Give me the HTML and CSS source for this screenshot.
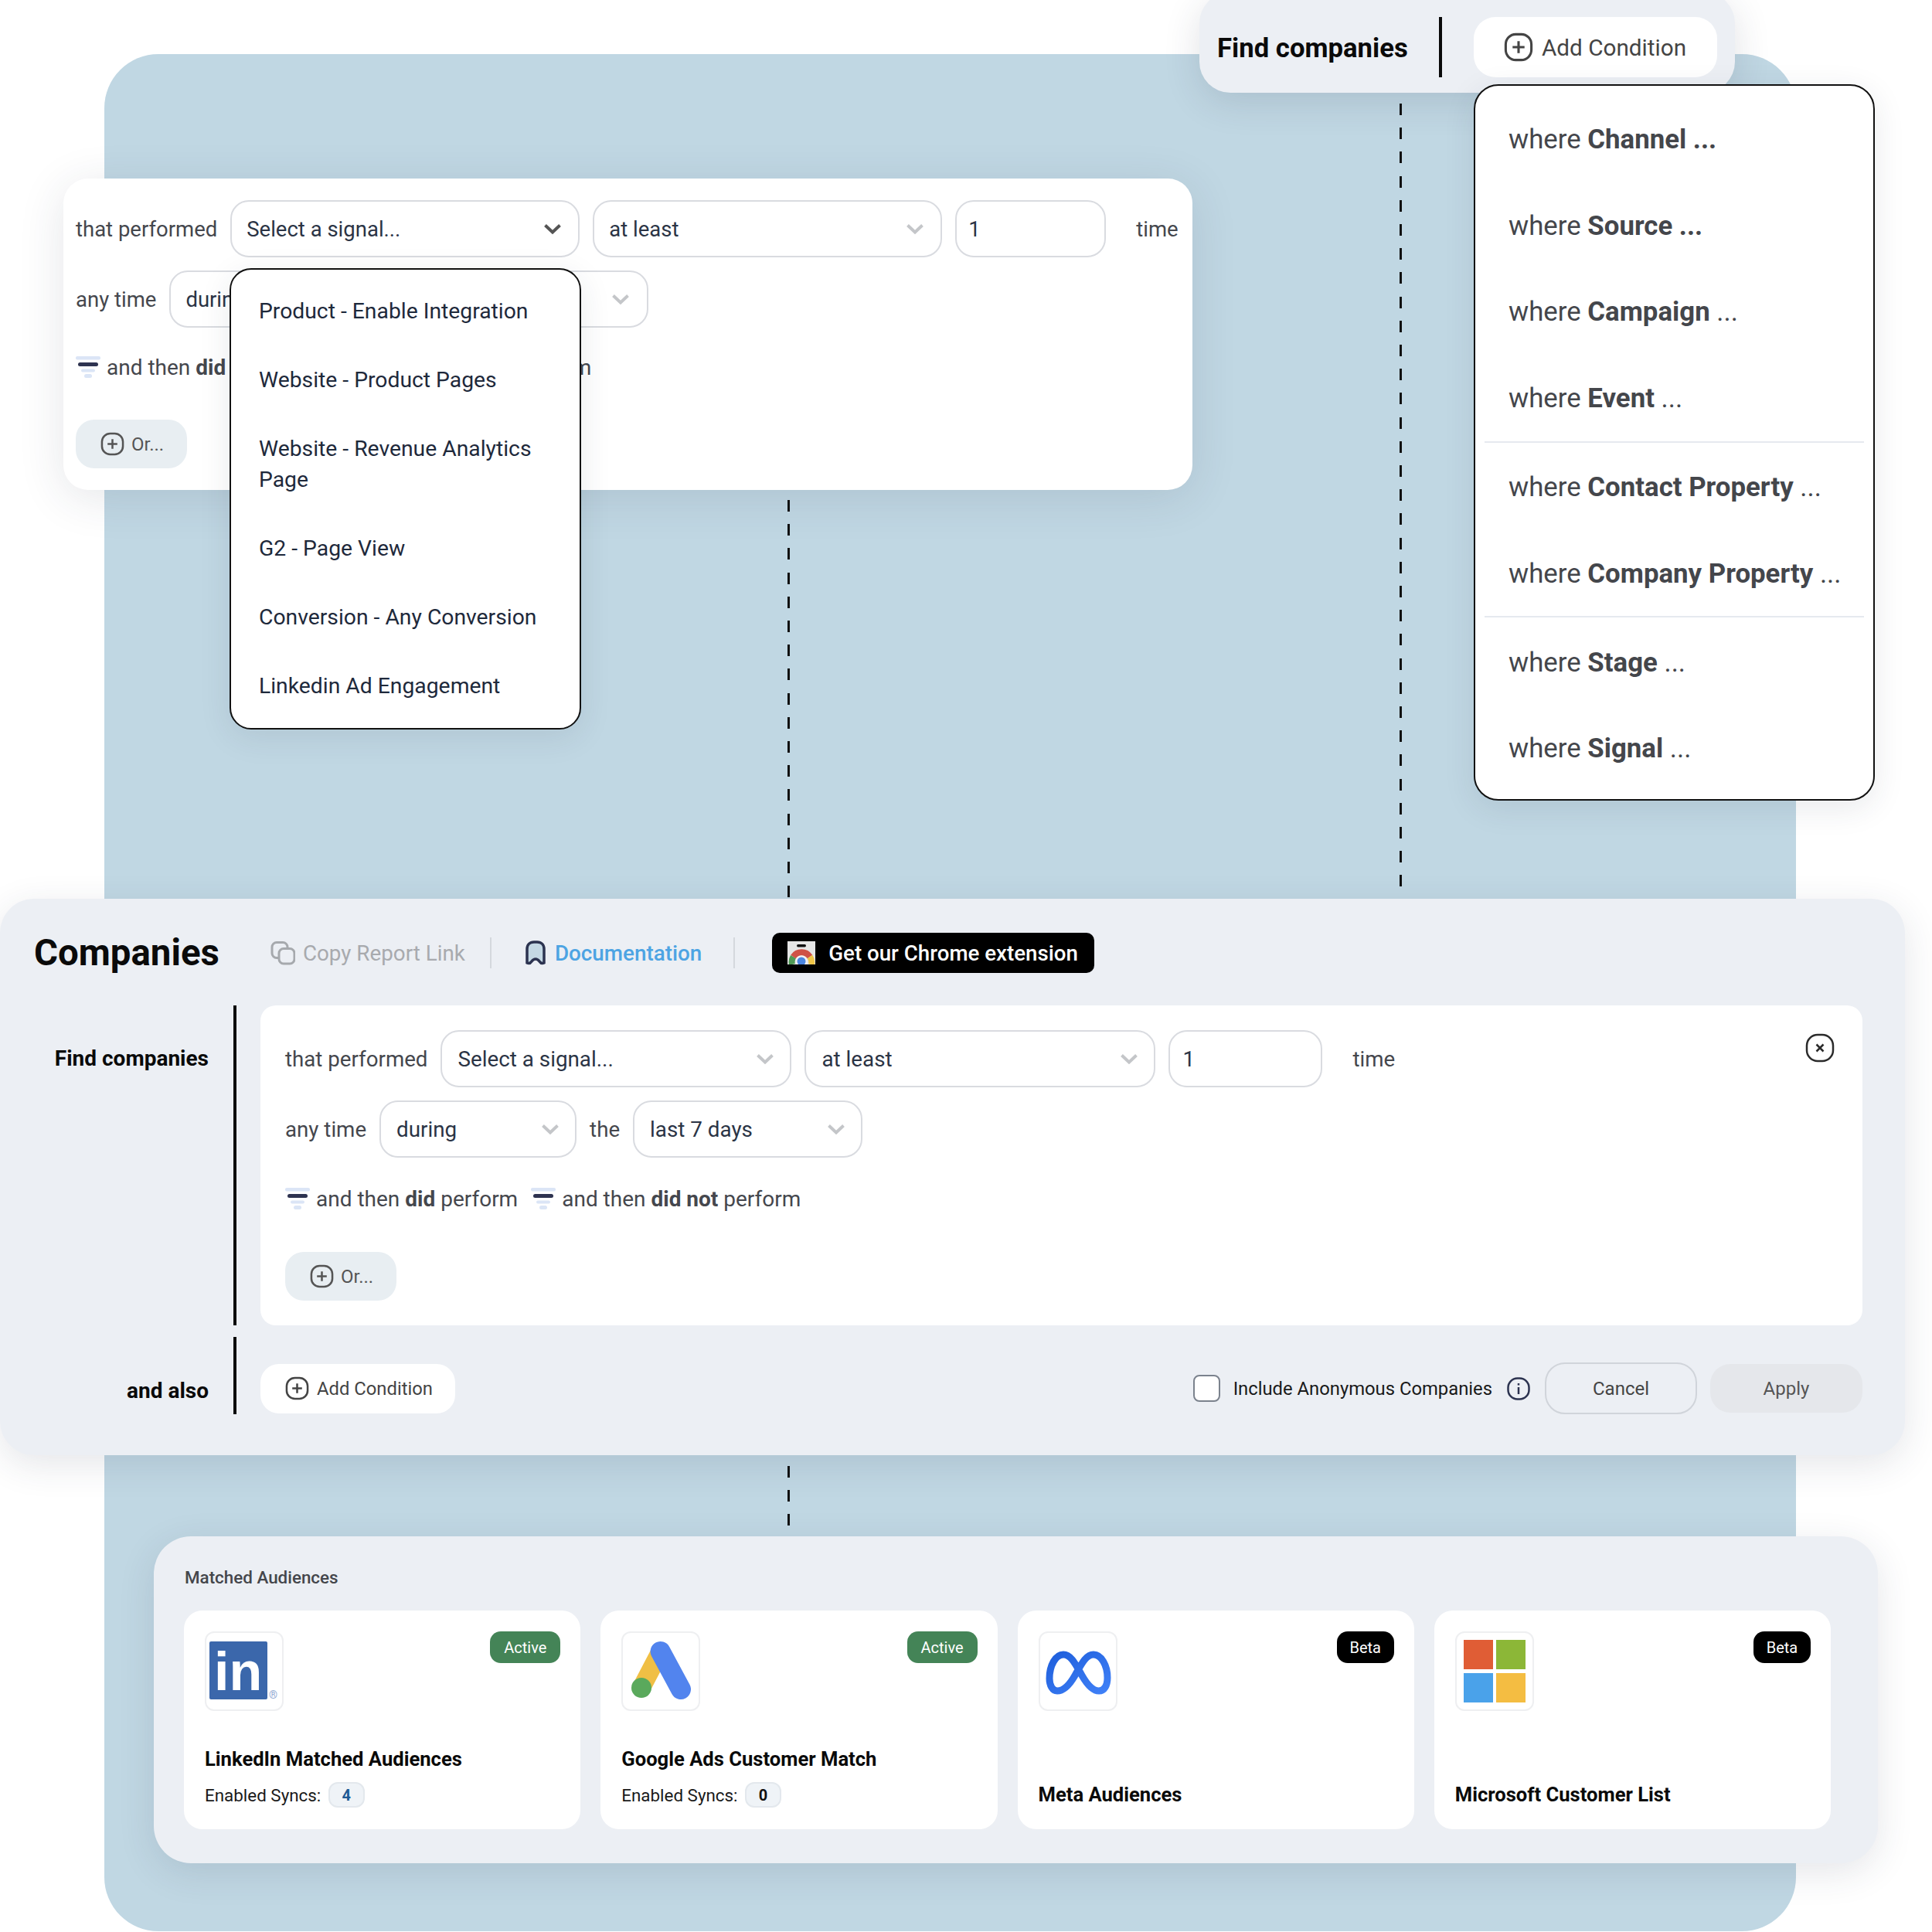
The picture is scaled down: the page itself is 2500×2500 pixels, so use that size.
FILE: index.html
```html
<!DOCTYPE html>
<html lang="en">
<head>
    <meta charset="UTF-8">
    <title>Companies - Find companies</title>
    <link rel="stylesheet" href="styles.css">
</head>
<body>
    <svg class="icon-defs" width="0" height="0">
        <symbol id="plus" viewBox="0 0 32 32">
            <rect x="2" y="2" width="28" height="28" rx="11" fill="none" stroke="currentColor" stroke-width="2.600"/>
            <path d="M16 9.500v13M9.500 16h13" fill="none" stroke="currentColor" stroke-width="2.600"/>
        </symbol>
        <symbol id="chevron" viewBox="0 0 24 14">
            <path d="M2.500 2.500L12 11.500L21.500 2.500" fill="none" stroke="currentColor" stroke-width="4"/>
        </symbol>
        <symbol id="funnel" viewBox="0 0 32 28">
            <rect x="0" y="0" width="32" height="4.500" rx="2" fill="#dbe5f6"/>
            <rect x="3" y="8" width="26" height="5" rx="2.500" fill="#2e3350"/>
            <rect x="7" y="16.500" width="18" height="4" rx="2" fill="#dbe5f6"/>
            <rect x="11" y="23" width="10" height="5" rx="2.500" fill="#dbe5f6"/>
        </symbol>
    </svg>

    <div class="stage">
        <div class="backdrop"></div>
        <div class="dash dash-right"></div>
        <div class="dash dash-middle"></div>
        <div class="dash dash-bottom"></div>

        <!-- top right: the bar with its condition menu -->
        <div class="find-bar">
            <span class="find-title">Find companies</span>
            <span class="find-rule"></span>
            <button class="add-btn add-btn-big"><svg class="plus-big"><use href="#plus"/></svg>Add Condition</button>
        </div>
        <ul class="menu condition-menu">
            <li>where <b>Channel ...</b></li>
            <li>where <b>Source ...</b></li>
            <li>where <b>Campaign</b> ...</li>
            <li class="group-end">where <b>Event</b> ...</li>
            <li>where <b>Contact Property</b> ...</li>
            <li class="group-end">where <b>Company Property</b> ...</li>
            <li>where <b>Stage</b> ...</li>
            <li>where <b>Signal</b> ...</li>
        </ul>

        <!-- top left: the signal form with its open select -->
        <div class="signal-panel">
            <div class="form-row">
                <span class="label">that performed</span>
                <div class="select select-signal">Select a signal...<svg class="chevron chevron-dark"><use href="#chevron"/></svg></div>
                <div class="select select-signal">at least<svg class="chevron"><use href="#chevron"/></svg></div>
                <div class="select select-count">1</div>
                <span class="label label-time">time</span>
            </div>
            <div class="form-row">
                <span class="label">any time</span>
                <div class="select select-during">during<svg class="chevron"><use href="#chevron"/></svg></div>
                <span class="label">the</span>
                <div class="select select-range">last 7 days<svg class="chevron"><use href="#chevron"/></svg></div>
            </div>
            <div class="then-row">
                <svg class="funnel"><use href="#funnel"/></svg><span class="label">and then <b>did</b> perform</span>
                <svg class="funnel funnel-next"><use href="#funnel"/></svg><span class="label">and then <b>did not</b> perform</span>
            </div>
            <button class="or-btn"><svg class="plus-small"><use href="#plus"/></svg>Or...</button>
            <ul class="menu signal-menu">
                <li>Product - Enable Integration</li>
                <li>Website - Product Pages</li>
                <li>Website - Revenue Analytics Page</li>
                <li>G2 - Page View</li>
                <li>Conversion - Any Conversion</li>
                <li>Linkedin Ad Engagement</li>
            </ul>
        </div>

        <!-- main companies panel -->
        <div class="companies-panel">
            <div class="companies-head">
                <h1>Companies</h1>
                <span class="copy-link">
                    <svg class="head-icon" viewBox="0 0 32 31">
                        <rect x="2" y="2" width="20" height="20" rx="6" fill="none" stroke="#a6a9ad" stroke-width="3"/>
                        <rect x="11" y="10" width="20" height="19.500" rx="6" fill="#eceff4" stroke="#a6a9ad" stroke-width="3"/>
                    </svg>
                    Copy Report Link
                </span>
                <span class="head-rule"></span>
                <span class="docs-link">
                    <svg class="head-icon" viewBox="0 0 28 32">
                        <path d="M3 29V11C3 5.500 6.500 2 12 2h4c5.500 0 9 3.500 9 9v18c-3 1.500-5-.5-6-2-1.500-2-3.500-3-5-3s-3.500 1-5 3c-1 1.500-3 3.500-6 2z" fill="#c4d8e4" stroke="#2c3350" stroke-width="3.500"/>
                    </svg>
                    Documentation
                </span>
                <span class="head-rule head-rule-last"></span>
                <span class="chrome-btn">
                    <svg class="chrome-icon" viewBox="0 0 36 30">
                        <rect width="36" height="30" fill="#e6e6e6"/>
                        <rect x="12" y="4" width="12" height="3.500" rx="1.700" fill="#111"/>
                        <path d="M6 30A13 13 0 0 1 7.500 20" fill="none" stroke="#4f9a55" stroke-width="8"/>
                        <path d="M7.500 20A13 13 0 0 1 29 20" fill="none" stroke="#cf5246" stroke-width="8"/>
                        <path d="M29 20A13 13 0 0 1 31 30" fill="none" stroke="#efc648" stroke-width="8"/>
                        <circle cx="18" cy="26" r="7.500" fill="#f4f4f4"/>
                        <circle cx="18" cy="26" r="5.500" fill="#4b86e0"/>
                    </svg>
                    Get our Chrome extension
                </span>
            </div>

            <div class="query-row">
                <div class="query-label">Find companies</div>
                <div class="query-bar"></div>
                <div class="query-card">
                    <div class="form-row">
                        <span class="label">that performed</span>
                        <div class="select select-signal">Select a signal...<svg class="chevron"><use href="#chevron"/></svg></div>
                        <div class="select select-signal">at least<svg class="chevron"><use href="#chevron"/></svg></div>
                        <div class="select select-count">1</div>
                        <span class="label label-time">time</span>
                    </div>
                    <div class="form-row">
                        <span class="label">any time</span>
                        <div class="select select-during">during<svg class="chevron"><use href="#chevron"/></svg></div>
                        <span class="label">the</span>
                        <div class="select select-range">last 7 days<svg class="chevron"><use href="#chevron"/></svg></div>
                    </div>
                    <div class="then-row">
                        <svg class="funnel"><use href="#funnel"/></svg><span class="label">and then <b>did</b> perform</span>
                        <svg class="funnel funnel-next"><use href="#funnel"/></svg><span class="label">and then <b>did not</b> perform</span>
                    </div>
                    <button class="or-btn"><svg class="plus-small"><use href="#plus"/></svg>Or...</button>
                    <svg class="close-icon" viewBox="0 0 38 38">
                        <rect x="2" y="2" width="34" height="34" rx="14" fill="none" stroke="#2b2b2b" stroke-width="2.500"/>
                        <path d="M14.500 14.500l9 9M23.500 14.500l-9 9" fill="none" stroke="#2b2b2b" stroke-width="2.500"/>
                    </svg>
                </div>
            </div>

            <div class="query-row also-row">
                <div class="query-label">and also</div>
                <div class="query-bar"></div>
                <div class="also-controls">
                    <button class="add-btn"><svg class="plus-small"><use href="#plus"/></svg>Add Condition</button>
                    <div class="also-actions">
                        <span class="checkbox"></span>
                        <span class="anon-label">Include Anonymous Companies</span>
                        <svg class="info-icon" viewBox="0 0 30 30">
                            <rect x="1.500" y="1.500" width="27" height="27" rx="12" fill="none" stroke="#2c3350" stroke-width="2.500"/>
                            <path d="M15 13v9M15 8v2.500" fill="none" stroke="#2c3350" stroke-width="2.500"/>
                        </svg>
                        <button class="cancel-btn">Cancel</button>
                        <button class="apply-btn">Apply</button>
                    </div>
                </div>
            </div>
        </div>

        <!-- matched audiences -->
        <div class="audiences-panel">
            <h2>Matched Audiences</h2>
            <div class="audience-grid">
                <div class="audience-card">
                    <div class="card-top">
                        <div class="logo-box">
                            <div class="linkedin-logo">in</div>
                            <span class="linkedin-mark">®</span>
                        </div>
                        <span class="status status-active">Active</span>
                    </div>
                    <div class="card-title">LinkedIn Matched Audiences</div>
                    <div class="card-syncs">Enabled Syncs: <span class="sync-count sync-on">4</span></div>
                </div>
                <div class="audience-card">
                    <div class="card-top">
                        <div class="logo-box">
                            <svg class="brand-logo" viewBox="0 0 102 102">
                                <path d="M50.600 26L26 73" fill="none" stroke="#f0bf45" stroke-width="24" stroke-linecap="round"/>
                                <path d="M50.600 26L77 75" fill="none" stroke="#5284ee" stroke-width="26" stroke-linecap="round"/>
                                <circle cx="26" cy="73" r="13" fill="#5aa95c"/>
                            </svg>
                        </div>
                        <span class="status status-active">Active</span>
                    </div>
                    <div class="card-title">Google Ads Customer Match</div>
                    <div class="card-syncs">Enabled Syncs: <span class="sync-count">0</span></div>
                </div>
                <div class="audience-card">
                    <div class="card-top">
                        <div class="logo-box">
                            <svg class="brand-logo" viewBox="0 0 102 102">
                                <defs>
                                    <linearGradient id="meta-blue" x1="0" y1="0" x2="1" y2="1">
                                        <stop offset="0" stop-color="#1f5fdc"/>
                                        <stop offset="1" stop-color="#3f80f7"/>
                                    </linearGradient>
                                </defs>
                                <path d="M14 61C14 44 22 30 32 30C42 30 48 43 56 57C64 71 71 77 78 77C85 77 89 70 89 60C89 44 81 30 71 30C61 30 55 43 47 57C39 71 31 77 24 77C18 77 14 70 14 61Z" fill="none" stroke="url(#meta-blue)" stroke-width="9"/>
                            </svg>
                        </div>
                        <span class="status status-beta">Beta</span>
                    </div>
                    <div class="card-title">Meta Audiences</div>
                </div>
                <div class="audience-card">
                    <div class="card-top">
                        <div class="logo-box">
                            <div class="ms-logo">
                                <span class="ms-red"></span>
                                <span class="ms-green"></span>
                                <span class="ms-blue"></span>
                                <span class="ms-yellow"></span>
                            </div>
                        </div>
                        <span class="status status-beta">Beta</span>
                    </div>
                    <div class="card-title">Microsoft Customer List</div>
                </div>
            </div>
        </div>
    </div>
</body>
</html>
```

FILE: styles.css
```css
* {
    box-sizing: border-box;
}
body {
    margin: 0;
    background: #fff;
    font-family: Roboto, 'Liberation Sans', sans-serif;
    overflow: hidden;
}
button {
    font: inherit;
    border: none;
    padding: 0;
}
.icon-defs {
    position: absolute;
}
.stage {
    position: relative;
    width: 2500px;
    height: 2500px;
    overflow: hidden;
}
.backdrop {
    position: absolute;
    left: 135px;
    top: 70px;
    width: 2189px;
    height: 2429px;
    border-radius: 70px;
    background: #c0d7e3;
}
.dash {
    position: absolute;
    width: 3px;
    background: repeating-linear-gradient(to bottom, #111 0 15px, transparent 15px 31.2px);
}
.dash-right {
    left: 1811px;
    top: 134px;
    height: 1016px;
}
.dash-middle {
    left: 1019px;
    top: 647px;
    height: 515px;
}
.dash-bottom {
    left: 1019px;
    top: 1897px;
    height: 80px;
}

/* top bar */
.find-bar {
    position: absolute;
    left: 1552px;
    top: -10px;
    width: 693px;
    height: 130px;
    padding: 32px 23px 20px;
    display: flex;
    align-items: center;
    background: #eceff4;
    border-radius: 40px;
    box-shadow: 0 12px 48px rgba(40, 50, 70, 0.14);
}
.find-title {
    font-size: 34.700px;
    font-weight: 700;
    color: #0a0a0a;
    width: 288px;
    padding-top: 2px;
}
.find-rule {
    width: 4px;
    height: 78px;
    background: #0a0a0a;
    margin-right: 41px;
}
.add-btn {
    display: flex;
    align-items: center;
    gap: 10px;
    width: 252px;
    height: 64px;
    padding-left: 32px;
    background: #fff;
    border-radius: 24px;
    font-size: 23.800px;
    color: #444;
}
.add-btn-big {
    width: 316px;
    height: 78px;
    padding-left: 39px;
    font-size: 29.700px;
    gap: 11px;
    border-radius: 28px;
}
.plus-big {
    width: 38px;
    height: 38px;
}
.plus-small {
    width: 31px;
    height: 31px;
}

/* menus */
.menu {
    position: absolute;
    margin: 0;
    padding: 0;
    list-style: none;
    background: #fff;
    border: 2px solid #111;
    box-shadow: 0 10px 40px rgba(40, 50, 70, 0.1);
}
.condition-menu {
    left: 1907px;
    top: 109px;
    width: 519px;
    height: 927px;
    padding-top: 13px;
    border-radius: 32px;
    font-size: 34.800px;
    color: #44464b;
}
.condition-menu li {
    height: 111.700px;
    padding-left: 43px;
    display: flex;
    align-items: center;
    white-space: pre;
}
.condition-menu .group-end {
    position: relative;
    margin-bottom: 3.300px;
}
.condition-menu .group-end::after {
    content: '';
    position: absolute;
    left: 12px;
    right: 12px;
    bottom: -2px;
    height: 2px;
    background: #e6e9ef;
}
.condition-menu b {
    font-weight: 700;
}
.signal-menu {
    left: 215px;
    top: 116px;
    width: 455px;
    height: 597px;
    padding: 33.500px 36px;
    border-radius: 28px;
    font-size: 28.300px;
    line-height: 40px;
    color: #1e293b;
}
.signal-menu li {
    margin-bottom: 49.200px;
}

/* condition form */
.signal-panel {
    position: absolute;
    left: 82px;
    top: 231px;
    width: 1461px;
    height: 403px;
    padding: 28px 16px;
    background: #fff;
    border-radius: 32px;
    box-shadow: 0 10px 60px rgba(40, 50, 70, 0.12);
}
.form-row {
    display: flex;
    align-items: center;
    gap: 17px;
    margin-bottom: 17px;
}
.label {
    font-size: 27.500px;
    color: #45474d;
    white-space: nowrap;
}
.query-card .label {
    font-size: 27.700px;
}
.query-card .then-row .label,
.then-row .label {
    font-size: 28px;
}
.label b {
    font-weight: 700;
}
.label-time {
    margin-left: 22px;
}
.select {
    height: 74px;
    padding: 0 20px;
    display: flex;
    align-items: center;
    justify-content: space-between;
    border: 2px solid #d9dbe0;
    border-radius: 24px;
    background: #fff;
    font-size: 27.800px;
    color: #2b3445;
}
.select-signal {
    width: 454px;
}
.select-count {
    width: 199px;
    padding: 0 16px;
}
.select-during {
    width: 255px;
}
.select-range {
    width: 297px;
}
.signal-panel .select {
    font-size: 27.500px;
    padding: 0 21px 0 19px;
}
.signal-panel .select-signal {
    width: 452px;
}
.signal-panel .select-count {
    width: 195px;
    padding: 0 15px;
}
.signal-panel .select-during {
    width: 253px;
}
.signal-panel .select-range {
    width: 294px;
    padding-right: 22px;
}
.chevron {
    width: 24px;
    height: 14px;
    color: #c4c6c9;
}
.chevron-dark {
    color: #555;
}
.then-row {
    display: flex;
    align-items: center;
    margin-top: 37px;
    height: 32px;
}
.signal-panel .then-row {
    margin-top: 35px;
}
.funnel {
    width: 32px;
    height: 28px;
    margin-right: 8px;
}
.funnel-next {
    margin-left: 17px;
}
.or-btn {
    display: flex;
    align-items: center;
    gap: 9px;
    width: 144px;
    height: 63px;
    margin-top: 53px;
    padding-left: 32px;
    background: #e8eef2;
    border-radius: 24px;
    font-size: 24px;
    color: #555;
}
.signal-panel .or-btn {
    margin-top: 52px;
}

/* companies panel */
.companies-panel {
    position: absolute;
    left: 0;
    top: 1163px;
    width: 2465px;
    height: 720px;
    padding-top: 44px;
    background: #eceff4;
    border-radius: 44px;
    box-shadow: 0 12px 48px rgba(40, 50, 70, 0.12);
}
.companies-head {
    display: flex;
    align-items: center;
    height: 52px;
    padding-left: 44px;
    margin-bottom: 42px;
}
h1 {
    margin: 0 66px 0 0;
    font-size: 47.400px;
    font-weight: 700;
    color: #0a0a0a;
}
.copy-link,
.docs-link {
    display: flex;
    align-items: center;
    gap: 10px;
    font-size: 27.800px;
}
.copy-link {
    color: #a8aaae;
}
.docs-link {
    gap: 9px;
    color: #4da4e3;
    font-weight: 500;
}
.head-icon {
    width: 32px;
    height: 32px;
}
.head-rule {
    width: 2px;
    height: 40px;
    background: #d4d8dd;
    margin: 0 41px 0 32px;
}
.head-rule-last {
    margin: 0 48px 0 41px;
}
.chrome-btn {
    display: flex;
    align-items: center;
    gap: 17px;
    width: 417px;
    height: 52px;
    padding-left: 20px;
    background: #000;
    border-radius: 10px;
    color: #fff;
    font-size: 27.700px;
    font-weight: 500;
}
.chrome-icon {
    width: 36px;
    height: 30px;
}
.query-row {
    display: flex;
    height: 414px;
}
.query-label {
    width: 270px;
    margin-right: 32px;
    padding-top: 52px;
    text-align: right;
    font-size: 28px;
    line-height: 34px;
    font-weight: 700;
    color: #0a0a0a;
}
.query-bar {
    width: 4px;
    background: #0a0a0a;
    margin-right: 31px;
}
.query-card {
    position: relative;
    width: 2073px;
    padding: 32px;
    background: #fff;
    border-radius: 20px;
}
.close-icon {
    position: absolute;
    right: 36px;
    top: 36px;
    width: 38px;
    height: 38px;
}
.also-row {
    height: 100px;
    margin-top: 15px;
}
.also-row .query-label {
    padding-top: 53px;
}
.also-controls {
    width: 2073px;
    padding-top: 33px;
    display: flex;
    align-items: center;
    justify-content: space-between;
}
.also-actions {
    display: flex;
    align-items: center;
}
.checkbox {
    width: 35px;
    height: 35px;
    margin-right: 17px;
    background: #fff;
    border: 2px solid #7b828d;
    border-radius: 8px;
}
.anon-label {
    font-size: 23.800px;
    color: #1a1a1a;
}
.info-icon {
    width: 30px;
    height: 30px;
    margin: 0 19px 0 19px;
}
.cancel-btn,
.apply-btn {
    width: 197px;
    font-size: 24px;
    border-radius: 26px;
    color: #444;
}
.cancel-btn {
    height: 67px;
    border: 2px solid #d0d4da;
    background: #eceff4;
    margin-right: 17px;
}
.apply-btn {
    height: 63px;
    background: #e5e7eb;
    color: #555;
}

/* matched audiences */
.audiences-panel {
    position: absolute;
    left: 199px;
    top: 1988px;
    width: 2231px;
    height: 423px;
    padding: 40px 61px 0 39px;
    background: #eceff4;
    border-radius: 48px;
    box-shadow: 0 12px 48px rgba(40, 50, 70, 0.12);
}
h2 {
    margin: 0 0 30px 1px;
    font-size: 22.400px;
    line-height: 26px;
    font-weight: 500;
    color: #44464b;
}
.audience-grid {
    display: grid;
    grid-template-columns: repeat(4, 1fr);
    gap: 26px;
}
.audience-card {
    height: 283px;
    padding: 27px 26px 28px 27px;
    display: flex;
    flex-direction: column;
    background: #fff;
    border-radius: 24px;
}
.card-top {
    display: flex;
    justify-content: space-between;
    align-items: flex-start;
    margin-bottom: auto;
}
.logo-box {
    position: relative;
    width: 102px;
    height: 103px;
    background: #fff;
    border: 2px solid #eeeff1;
    border-radius: 12px;
    overflow: hidden;
}
.brand-logo {
    position: absolute;
    left: -2px;
    top: -2px;
    width: 102px;
    height: 102px;
}
.linkedin-logo {
    position: absolute;
    left: 4px;
    top: 11px;
    width: 75px;
    height: 75px;
    padding: 3px 0 0 6px;
    background: #3b67ab;
    border-radius: 2px;
    color: #fff;
    font-family: 'Liberation Sans', sans-serif;
    font-weight: 700;
    font-size: 70px;
    line-height: 72px;
}
.linkedin-mark {
    position: absolute;
    left: 81px;
    top: 71px;
    font-size: 14px;
    line-height: 18px;
    color: #8fa9d2;
}
.ms-logo {
    position: absolute;
    left: 9px;
    top: 9px;
    display: grid;
    grid-template-columns: 38px 38px;
    grid-template-rows: 38px 38px;
    gap: 5px 4px;
}
.ms-red {
    background: #e05d35;
}
.ms-green {
    background: #8cb737;
}
.ms-blue {
    background: #4aa2ea;
}
.ms-yellow {
    background: #f4bd42;
}
.status {
    height: 41px;
    display: flex;
    align-items: center;
    justify-content: center;
    border-radius: 14px;
    font-size: 20px;
    color: #fff;
}
.status-active {
    width: 91px;
    background: #448457;
}
.status-beta {
    width: 74px;
    background: #000;
}
.card-title {
    font-size: 25.600px;
    line-height: 34px;
    font-weight: 700;
    color: #0a0a0a;
}
.card-syncs {
    display: flex;
    align-items: center;
    gap: 4px;
    height: 33px;
    margin-top: 13px;
    font-size: 22.400px;
    color: #1a1a1a;
    white-space: pre;
}
.sync-count {
    width: 47px;
    height: 33px;
    display: flex;
    align-items: center;
    justify-content: center;
    background: #eff3f7;
    border: 2px solid #e3e8ed;
    border-radius: 12px;
    font-size: 20px;
    font-weight: 700;
    color: #111;
}
.sync-on {
    color: #1f5a94;
}
```
